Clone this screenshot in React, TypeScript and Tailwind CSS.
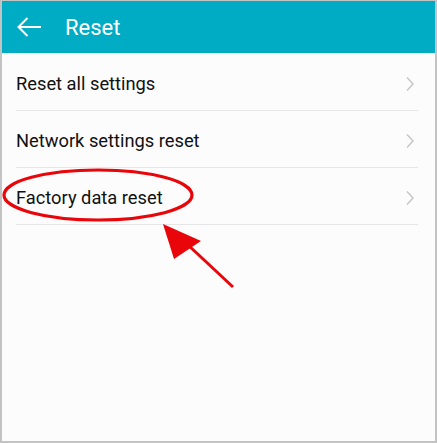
import React from "react";

const Chevron = () => (
  <svg width="10" height="16" viewBox="0 0 10 16" className="shrink-0">
    <path d="M2 1.5 L8 8 L2 14.5" fill="none" stroke="#c4c4c4" strokeWidth="1.4" />
  </svg>
);

const Row = ({ label }: { label: string }) => (
  <div className="flex items-center justify-between h-[57px] border-b border-[#e6e6e6] ml-[14px] mr-[17px] pr-[3px] pt-[3px]">
    <span className="text-[18.3px] text-[#111111]">{label}</span>
    <Chevron />
  </div>
);

export default function App() {
  return (
    <div
      className="w-[437px] h-[443px] bg-[#c3c3c3] pl-[2px] pr-[2px] pt-[1px] pb-[2px]"
      style={{ fontFamily: "Roboto, 'Noto Sans', sans-serif" }}
    >
      <div className="relative w-full h-full bg-[#fcfcfc] overflow-hidden">
        <div className="h-[52px] bg-[#00acc4] flex items-center">
          <svg width="26" height="20" viewBox="0 0 26 20" className="ml-[15px]">
            <path d="M1.5 10 H24 M10.5 1 L1.5 10 L10.5 19" fill="none" stroke="#ffffff" strokeWidth="2" />
          </svg>
          <span className="ml-[22px] text-white text-[22px]">Reset</span>
        </div>
        <div className="pt-[1px]">
          <Row label="Reset all settings" />
          <Row label="Network settings reset" />
          <Row label="Factory data reset" />
        </div>
        <svg className="absolute left-0 top-0 pointer-events-none" width="433" height="440" viewBox="0 0 433 440">
          <ellipse cx="96" cy="194" rx="94" ry="25" fill="none" stroke="#e8060a" strokeWidth="3.2" />
          <line x1="231" y1="286" x2="185" y2="243" stroke="#e8060a" strokeWidth="3" />
          <polygon points="161,223 199,240 172,258" fill="#e8060a" />
        </svg>
      </div>
    </div>
  );
}
